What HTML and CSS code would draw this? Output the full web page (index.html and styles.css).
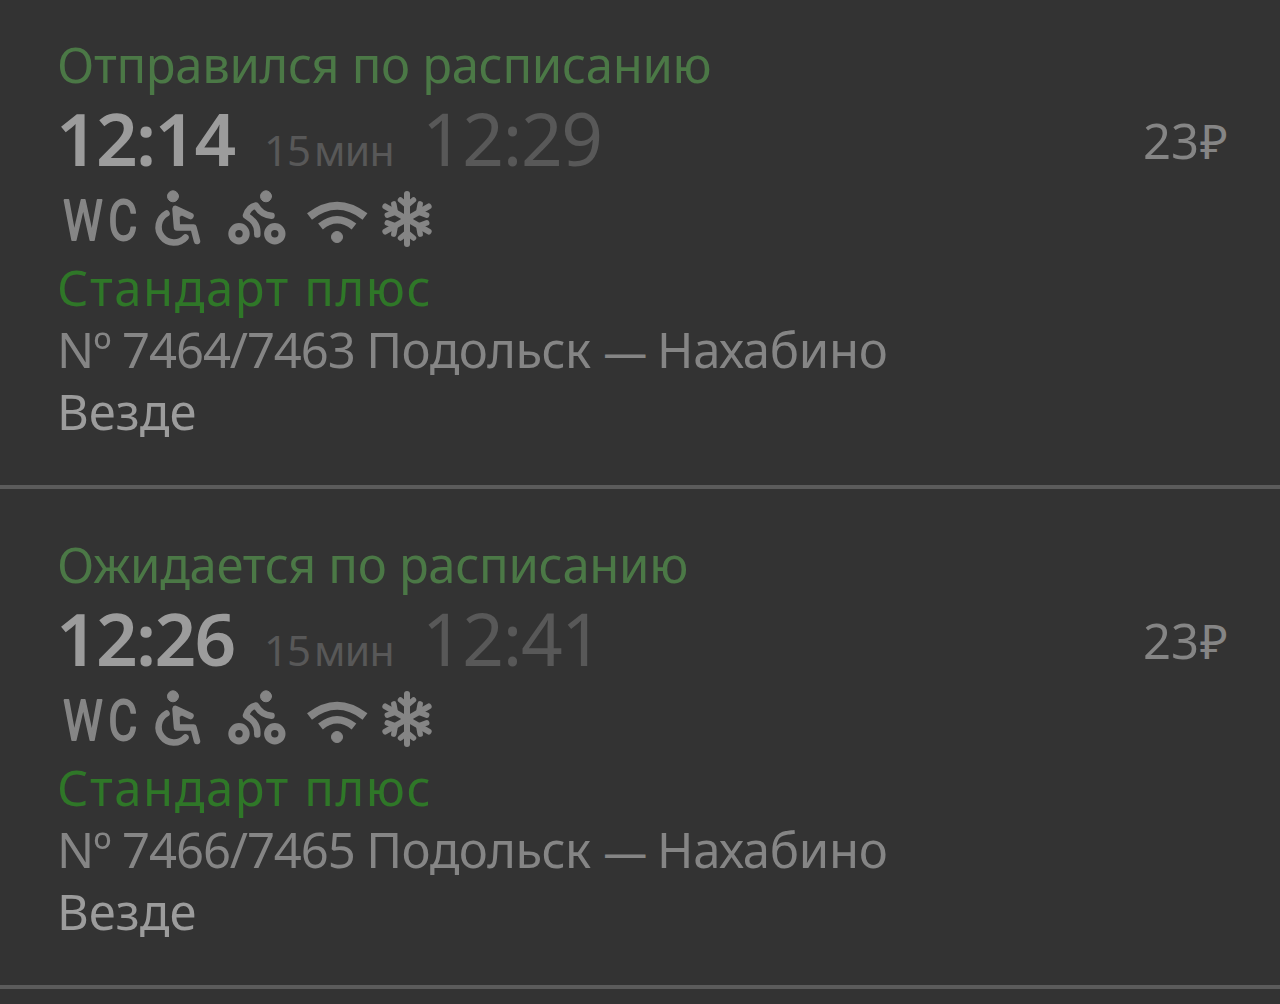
FILE: index.html
```html
<!DOCTYPE html>
<html lang="ru">
<head>
    <meta charset="UTF-8">
    <meta name="viewport" content="width=device-width, initial-scale=1.0">
    <title>Расписание</title>
    <link rel="stylesheet" href="styles.css">
</head>
<body>
    <!-- Иконки удобств -->
    <svg class="sprite" width="0" height="0">
        <symbol id="amenities" viewBox="0 0 380 72">
            <!-- коляска -->
            <g class="line">
                <circle class="fill" cx="115" cy="14.300" r="5.500"/>
                <path stroke-width="6.500" d="M108.500 31.500A15.500 15.500 0 1 0 127.500 55.500"/>
                <path stroke-width="6.500" d="M132.500 34L117.500 27L119 45.500H135.500L139 59"/>
                <path class="fill" d="M116 25L125 32L121 35V45H117Z"/>
            </g>
            <!-- велосипед -->
            <g class="line">
                <circle class="fill" cx="208" cy="14.300" r="5.500"/>
                <circle stroke-width="7" cx="181" cy="51.700" r="7.200"/>
                <circle stroke-width="7" cx="216.800" cy="51.700" r="7.200"/>
                <path stroke-width="6.500" d="M199.300 52.500V50C199.300 42 195 38 188 33.500C190 27 193 24.500 198 23.500Q203 33 213.500 33.700"/>
            </g>
            <!-- wi-fi -->
            <g class="line butt">
                <path stroke-width="8" d="M251.500 34.500Q279 13 307 34.500"/>
                <path stroke-width="7.500" d="M262.500 44.500Q279 31 296 44.500"/>
                <circle class="fill" cx="279" cy="55" r="5.500"/>
            </g>
            <!-- кондиционер -->
            <g class="line">
                <g id="ray">
                    <path stroke-width="6" d="M349 37V12"/>
                    <path stroke-width="5.500" d="M342.500 18L349 23.500L355.500 18"/>
                </g>
                <use href="#ray" transform="rotate(60 349 37)"/>
                <use href="#ray" transform="rotate(120 349 37)"/>
                <use href="#ray" transform="rotate(180 349 37)"/>
                <use href="#ray" transform="rotate(240 349 37)"/>
                <use href="#ray" transform="rotate(300 349 37)"/>
                <circle class="fill" cx="349" cy="37" r="5"/>
            </g>
        </symbol>
    </svg>

    <div class="list">
        <div class="train">
            <div class="status">Отправился по расписанию</div>
            <div class="times">
                <span class="departure">12:14</span>
                <span class="duration">15<span class="unit">мин</span></span>
                <span class="arrival">12:29</span>
                <span class="price">23<span class="ruble">₽</span></span>
            </div>
            <svg class="icons">
                <text class="wc" x="5" y="58" textLength="80" lengthAdjust="spacingAndGlyphs">WC</text>
                <use href="#amenities"/>
            </svg>
            <div class="type">Стандарт плюс</div>
            <div class="route"><span class="number">Nº 7464/7463 </span><span class="city">Подольск</span> <span class="dash">—</span> <span class="city-to">Нахабино</span></div>
            <div class="stops">Везде</div>
        </div>

        <div class="train">
            <div class="status">Ожидается по расписанию</div>
            <div class="times">
                <span class="departure">12:26</span>
                <span class="duration">15<span class="unit">мин</span></span>
                <span class="arrival">12:41</span>
                <span class="price">23<span class="ruble">₽</span></span>
            </div>
            <svg class="icons">
                <text class="wc" x="5" y="58" textLength="80" lengthAdjust="spacingAndGlyphs">WC</text>
                <use href="#amenities"/>
            </svg>
            <div class="type">Стандарт плюс</div>
            <div class="route"><span class="number">Nº 7466/7465 </span><span class="city">Подольск</span> <span class="dash">—</span> <span class="city-to">Нахабино</span></div>
            <div class="stops">Везде</div>
        </div>
    </div>
</body>
</html>
```
FILE: styles.css
```css
body {
    margin: 0;
    background-color: #333333;
    color: #858585;
    font-family: "Noto Sans", "Open Sans", sans-serif;
    font-size: 49px;
    line-height: 62px;
    white-space: nowrap;
    overflow: hidden;
}

.sprite {
    display: block;
}

/* Карточка поезда */
.train {
    box-sizing: border-box;
    height: 500px;
    padding: 44px 52px 0 57px;
    border-bottom: 4px solid #5b5b5b;
}
.train:first-child {
    height: 489px;
    padding-top: 33px;
}

.status {
    height: 61px;
    color: #4b7846;
    letter-spacing: -0.33px;
}

/* Строка времени */
.times {
    display: flex;
    align-items: baseline;
    height: 88px;
    line-height: 88px;
}
.departure {
    width: 208px;
    margin-left: -1px;
    color: #9c9c9c;
    font-size: 73px;
    font-weight: 600;
    letter-spacing: -1.7px;
}
.duration {
    width: 158px;
    color: #585858;
    font-size: 42px;
    letter-spacing: -1px;
}
.unit {
    margin-left: 4px;
    letter-spacing: -0.8px;
    font-size: 41px;
}
.arrival {
    color: #585858;
    font-size: 73px;
    letter-spacing: -1.4px;
}
.price {
    margin-left: auto;
    align-self: center;
    padding-top: 4px;
}
.ruble {
    margin-left: 1px;
    font-size: 48px;
}

/* Удобства */
.icons {
    display: block;
    width: 380px;
    height: 72px;
    margin-left: 1px;
    color: #858585;
}
.wc {
    fill: currentColor;
    stroke: currentColor;
    stroke-width: 1.8;
    stroke-linejoin: round;
    font-family: Roboto, sans-serif;
    font-size: 56px;
    letter-spacing: 7px;
}
.line {
    fill: none;
    stroke: currentColor;
    stroke-linecap: round;
    stroke-linejoin: round;
}
.butt {
    stroke-linecap: butt;
}
.fill {
    fill: currentColor;
}

.type {
    padding-top: 2px;
    color: #2f7728;
    letter-spacing: 1.55px;
}
.route {
    height: 62px;
}
.number {
    letter-spacing: -1.1px;
}
.city {
    letter-spacing: -0.6px;
}
.dash {
    margin-right: -3px;
    font-size: 44px;
}
.city-to {
    letter-spacing: -0.3px;
}
.stops {
    color: #9c9c9c;
}
```
